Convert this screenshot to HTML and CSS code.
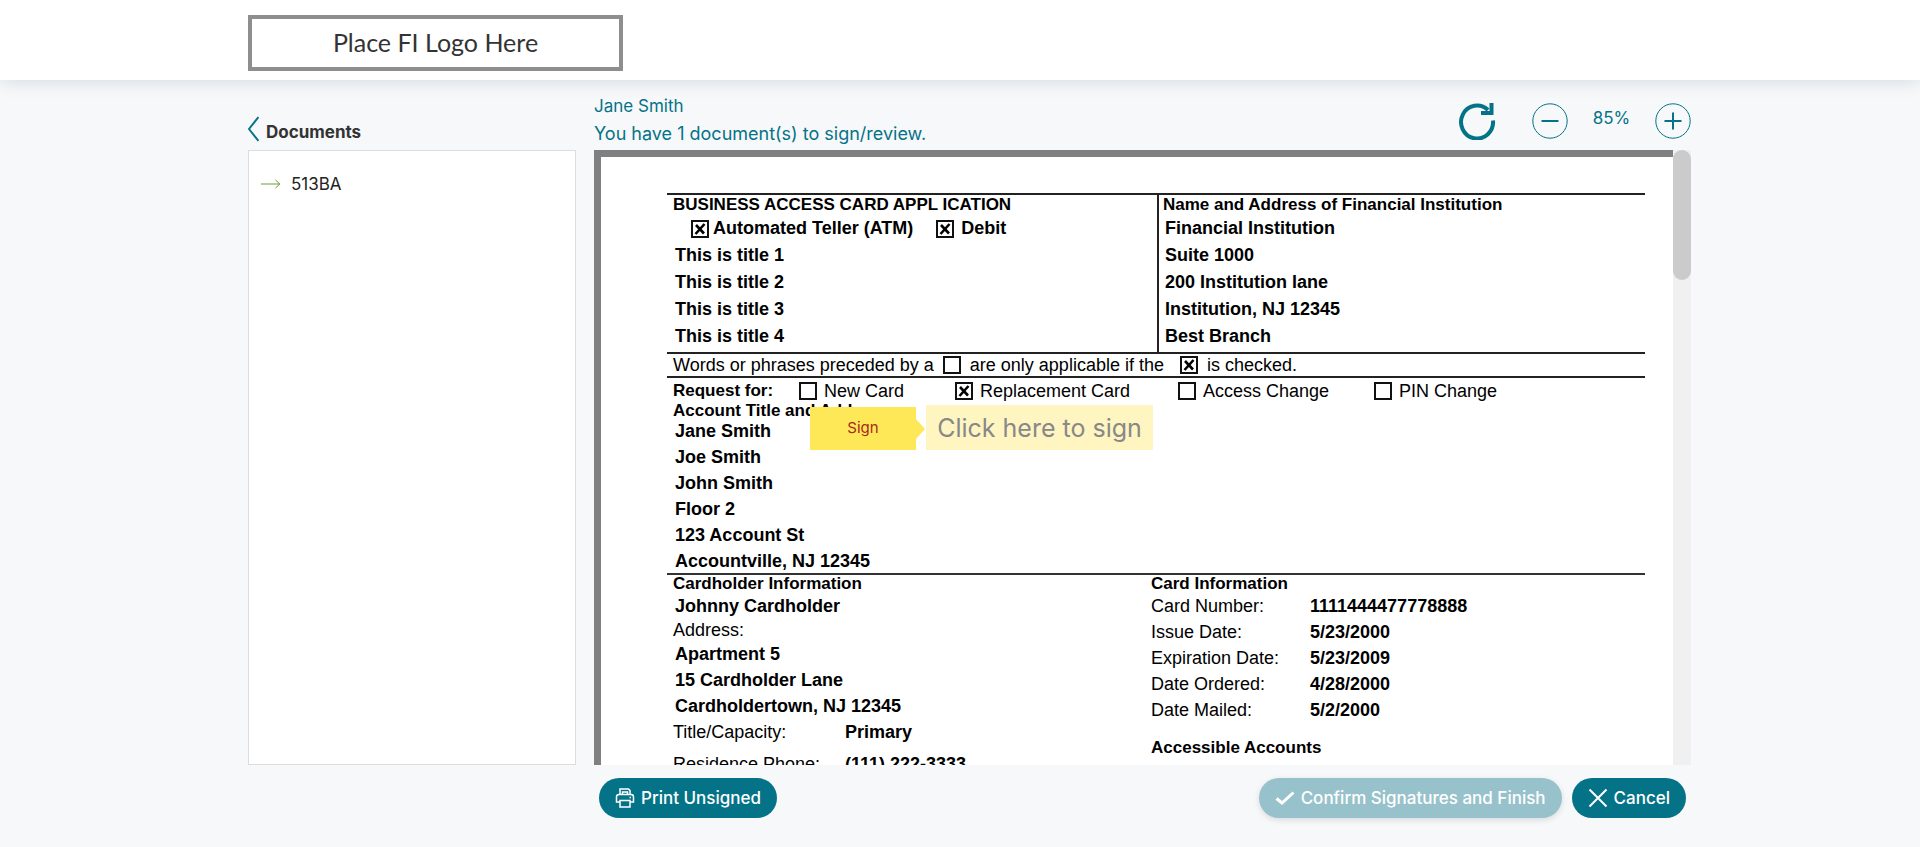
FILE: index.html
```html
<!DOCTYPE html>
<html lang="en">
<head>
  <meta charset="UTF-8">
  <meta name="viewport" content="width=device-width, initial-scale=1.0">
  <title>Sign Documents</title>
  <link rel="stylesheet" href="styles.css">
</head>
<body>
  <header class="header">
    <div class="container">
      <div class="logo">Place FI Logo Here</div>
    </div>
  </header>
  <main class="container main">
    <aside class="sidebar">
      <div class="sidebar-head">
        <button class="icon-btn back" aria-label="Back">
          <svg width="11" height="26" viewBox="0 0 11 26"><path d="M10.500 1 1 13 10.500 25" /></svg>
        </button>
        <h2>Documents</h2>
      </div>
      <nav class="doc-list">
        <a href="#">
          <svg width="20" height="10" viewBox="0 0 20 10"><path d="M0 5h19M14.500 1l4.300 4-4.300 4" /></svg>
          513BA
        </a>
      </nav>
    </aside>
    <section class="viewer">
      <div class="viewer-head">
        <div class="viewer-info">
          <p>Jane Smith</p>
          <p class="notice">You have 1 document(s) to sign/review.</p>
        </div>
        <div class="tools">
          <button class="icon-btn rotate" aria-label="Rotate">
            <svg width="38" height="38" viewBox="0 0 38 38"><path d="M35 18.500A16 16.500 0 1 1 30 8M33.500 1v10H23" /></svg>
          </button>
          <button class="icon-btn" aria-label="Zoom out">
            <svg width="36" height="36" viewBox="0 0 36 36"><circle cx="18" cy="18" r="17.200" /><path d="M9.500 18h17" /></svg>
          </button>
          <span class="zoom-level">85%</span>
          <button class="icon-btn" aria-label="Zoom in">
            <svg width="36" height="36" viewBox="0 0 36 36"><circle cx="18" cy="18" r="17.200" /><path d="M9.500 18h17M18 9.500v17" /></svg>
          </button>
        </div>
      </div>
      <div class="viewer-body">
        <div class="pages">
          <article class="page">
            <div class="top-block">
              <div class="cell">
                <h3>BUSINESS ACCESS CARD APPL ICATION</h3>
                <div class="row card-type">
                  <label><input type="checkbox" checked>Automated Teller (ATM)</label>
                  <label class="debit"><input type="checkbox" checked>Debit</label>
                </div>
                <p>This is title 1</p>
                <p>This is title 2</p>
                <p>This is title 3</p>
                <p>This is title 4</p>
              </div>
              <div class="cell institution">
                <h3>Name and Address of Financial Institution</h3>
                <p>Financial Institution</p>
                <p>Suite 1000</p>
                <p>200 Institution lane</p>
                <p>Institution, NJ 12345</p>
                <p>Best Branch</p>
              </div>
            </div>
            <div class="row words">
              <span>Words or phrases preceded by a</span>
              <input type="checkbox" aria-label="Unchecked sample">
              <span>are only applicable if the</span>
              <input type="checkbox" checked aria-label="Checked sample" class="sample">
              <span>is checked.</span>
            </div>
            <div class="request">
              <h3>Request for:</h3>
              <label><input type="checkbox">New Card</label>
              <label><input type="checkbox" checked>Replacement Card</label>
              <label><input type="checkbox">Access Change</label>
              <label><input type="checkbox">PIN Change</label>
            </div>
            <div class="account">
              <h3>Account Title and Address</h3>
              <p>Jane Smith</p>
              <p>Joe Smith</p>
              <p>John Smith</p>
              <p>Floor 2</p>
              <p>123 Account St</p>
              <p>Accountville, NJ 12345</p>
              <div class="sign-here">
                <span class="flag">Sign</span>
                <button class="sign-field">Click here to sign</button>
              </div>
            </div>
            <div class="details">
              <div class="cardholder">
                <h3>Cardholder Information</h3>
                <p>Johnny Cardholder</p>
                <p class="label">Address:</p>
                <p>Apartment 5</p>
                <p>15 Cardholder Lane</p>
                <p>Cardholdertown, NJ 12345</p>
                <dl>
                  <dt>Title/Capacity:</dt><dd>Primary</dd>
                  <dt>Residence Phone:</dt><dd>(111) 222-3333</dd>
                </dl>
              </div>
              <div class="card-info">
                <h3>Card Information</h3>
                <dl>
                  <dt>Card Number:</dt><dd>1111444477778888</dd>
                  <dt>Issue Date:</dt><dd>5/23/2000</dd>
                  <dt>Expiration Date:</dt><dd>5/23/2009</dd>
                  <dt>Date Ordered:</dt><dd>4/28/2000</dd>
                  <dt>Date Mailed:</dt><dd>5/2/2000</dd>
                </dl>
                <h3 class="accounts">Accessible Accounts</h3>
              </div>
            </div>
          </article>
        </div>
        <div class="scrollbar"><div class="thumb"></div></div>
      </div>
      <div class="actions">
        <button class="btn">
          <svg class="printer" width="20" height="20" viewBox="0 0 20 20"><path d="M5 6.500V1h8.500L15 2.500v4M5 14H1.500V9q0-2.500 2.500-2.500h12q2.500 0 2.500 2.500v5H15M5 12.500h10V19H5zM7.500 4h5v2.500h-5zM14.500 9.500h1.500" /></svg>
          Print Unsigned
        </button>
        <button class="btn confirm" disabled>
          <svg width="20" height="20" viewBox="0 0 20 20"><path class="thick" d="M1.500 10.500l5.500 4.500L18.500 4.500" /></svg>
          Confirm Signatures and Finish
        </button>
        <button class="btn">
          <svg width="20" height="20" viewBox="0 0 20 20"><path class="cross" d="M1.500 1.500l17 17M18.500 1.500l-17 17" /></svg>
          Cancel
        </button>
      </div>
    </section>
  </main>
</body>
</html>
```
FILE: styles.css
```css
*{
  box-sizing: border-box;
  margin: 0;
  padding: 0;
}
body{
  min-height: 100vh;
  background-color: #f7f8fa;
  color: #222;
  font-family: Inter, sans-serif;
  font-size: 17px;
  overflow: hidden;
}
button{
  font: inherit;
  border: none;
  background: none;
  cursor: pointer;
}
svg{
  display: block;
  flex: none;
  fill: none;
  stroke: currentColor;
  stroke-width: 2;
}
.container{
  max-width: 1462px;
  margin: 0 auto;
  padding-left: 19px;
}
.header{
  height: 80px;
  padding-top: 15px;
  background-color: #fff;
  box-shadow: 0 2px 16px rgba(40,80,100,.16);
}
.logo{
  width: 375px;
  height: 56px;
  border: 4px solid #8e8e8e;
  color: #333;
  font-family: Lato, sans-serif;
  font-size: 25px;
  line-height: 46px;
  text-align: center;
}
.main{
  display: flex;
  gap: 18px;
}
.sidebar{
  flex: none;
  width: 328px;
}
.sidebar-head{
  display: flex;
  align-items: flex-end;
  gap: 7px;
  height: 70px;
  padding-bottom: 8px;
}
.sidebar-head h2{
  color: #333;
  font-size: 17px;
  font-weight: 700;
  line-height: 20px;
}
.icon-btn{
  color: #047388;
}
.doc-list{
  height: 615px;
  padding: 21px 12px;
  border: 1px solid #ddd;
  background-color: #fff;
}
.doc-list a{
  display: flex;
  align-items: center;
  gap: 10px;
  color: #222;
  line-height: 24px;
  text-decoration: none;
}
.doc-list svg{
  color: #6a9f35;
  stroke-width: 1;
}
.viewer{
  flex: 1;
  min-width: 0;
}
.viewer-head{
  display: flex;
  justify-content: space-between;
  height: 70px;
  padding-top: 13px;
  color: #047388;
}
.viewer-info{
  line-height: 27px;
}
.notice{
  font-size: 18px;
}
.tools{
  display: flex;
  align-items: center;
  height: 55px;
}
.rotate{
  margin-right: 36px;
}
.rotate svg{
  stroke-width: 4;
}
.tools circle{
  stroke-width: 1;
}
.zoom-level{
  width: 87px;
  padding-bottom: 6px;
  text-align: center;
}
.viewer-body{
  display: flex;
  height: 615px;
}
.pages{
  flex: 1;
  overflow: hidden;
  border: solid #808080;
  border-width: 7px 0 0 7px;
}
.scrollbar{
  flex: none;
  width: 18px;
  background-color: #f0f0f0;
}
.thumb{
  height: 130px;
  border-radius: 9px;
  background-color: #cbcbcb;
}
.page{
  height: 1400px;
  padding: 36px 28px 0 66px;
  background-color: #fff;
  color: #000;
  font-family: "Liberation Sans", sans-serif;
  font-size: 18px;
  line-height: 26px;
}
.page h3{
  font-size: 17px;
  line-height: 20px;
}
.page p, .page dd{
  font-weight: bold;
}
.page p{
  padding-left: 2px;
}
.page input{
  appearance: none;
  flex: none;
  width: 18px;
  height: 18px;
  border: 2px solid #111;
}
.page input:checked{
  background: url("data:image/svg+xml,%3Csvg xmlns='http://www.w3.org/2000/svg' viewBox='0 0 14 14'%3E%3Cpath d='M3 3l8 8.500M11.500 2L2.500 12' stroke='%23000' stroke-width='2.600'/%3E%3C/svg%3E") center / 14px no-repeat;
}
.row, .page label{
  display: flex;
  align-items: center;
}
.top-block{
  display: grid;
  grid-template-columns: 490px 1fr;
  height: 161px;
  border: solid #222;
  border-width: 2px 0;
}
.cell{
  padding-left: 6px;
  line-height: 27px;
}
.institution{
  border-left: 2px solid #222;
  padding-left: 4px;
}
.card-type{
  padding-left: 18px;
  font-weight: bold;
}
.card-type label{
  gap: 4px;
}
.card-type .debit{
  gap: 7px;
  margin-left: 23px;
}
.words{
  gap: 9px;
  height: 24px;
  padding-left: 6px;
  border-bottom: 2px solid #222;
}
.words .sample{
  margin-left: 7px;
}
.request{
  display: grid;
  grid-template-columns: 126px 156px 223px 196px 1fr;
  align-items: center;
  height: 26px;
  padding-left: 6px;
}
.request label{
  gap: 7px;
}
.account{
  position: relative;
  height: 171px;
  padding-left: 6px;
  border-bottom: 2px solid #333;
}
.account h3{
  line-height: 14px;
}
/* signature tag sits over the form */
.sign-here{
  position: absolute;
  top: 1px;
  left: 143px;
  display: flex;
  align-items: flex-end;
  gap: 10px;
  font-family: Inter, sans-serif;
}
.flag{
  position: relative;
  width: 106px;
  height: 43px;
  background-color: #ffe858;
  color: #a52a1c;
  font-size: 15px;
  line-height: 42px;
  text-align: center;
}
.flag::after{
  content: "";
  position: absolute;
  left: 100%;
  top: 12px;
  border: solid transparent;
  border-width: 10px 0 10px 9px;
  border-left-color: #ffe858;
}
.sign-field{
  width: 227px;
  height: 45px;
  background-color: #fff5c0;
  color: #888;
  font-size: 25px;
}
.details{
  display: grid;
  grid-template-columns: 484px 1fr;
}
.details h3{
  line-height: 18px;
}
.cardholder{
  padding-left: 6px;
}
.cardholder .label{
  padding-left: 0;
  line-height: 22px;
  font-weight: normal;
}
.details dl{
  display: grid;
  grid-template-columns: 159px 1fr;
}
.cardholder dl{
  grid-template-columns: 172px 1fr;
  row-gap: 6px;
}
.accounts{
  margin-top: 16px;
}
.actions{
  display: flex;
  gap: 10px;
  padding: 13px 5px 0;
}
.btn{
  display: flex;
  align-items: center;
  gap: 6px;
  height: 40px;
  padding: 0 16px;
  border-radius: 20px;
  background-color: #047388;
  color: #fff;
  font-weight: 500;
}
.confirm{
  margin-left: auto;
  background-color: #98c2cb;
  box-shadow: 0 2px 6px rgba(0,0,0,.12);
}
.printer{
  stroke-width: 1.5;
}
.thick{
  stroke-width: 3;
}
```
